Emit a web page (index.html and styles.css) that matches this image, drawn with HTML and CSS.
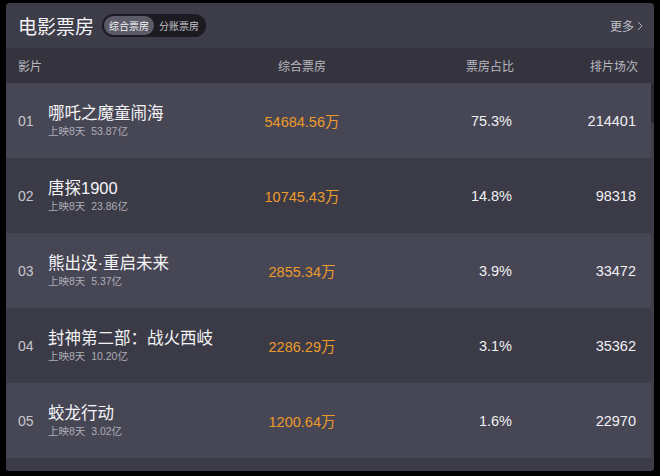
FILE: index.html
```html
<!DOCTYPE html>
<html lang="zh-CN">
<head>
<meta charset="utf-8">
<title>电影票房</title>
<link rel="stylesheet" href="styles.css">
</head>
<body>
<div class="card">
  <div class="top">
    <h1 class="title">电影票房</h1>
    <div class="toggle">
      <span class="seg active">综合票房</span>
      <span class="seg">分账票房</span>
    </div>
    <a class="more">更多<svg class="chev" width="6" height="10" viewBox="0 0 6 10"><path d="M1 1 L5 5 L1 9" fill="none" stroke="currentColor" stroke-width="1"/></svg></a>
  </div>
  <div class="thead grid">
    <span class="h-name">影片</span>
    <span class="c-center">综合票房</span>
    <span class="c-right h-pad">票房占比</span>
    <span class="c-right h-pad">排片场次</span>
  </div>
  <div class="body">
    <div class="rows">
      <div class="row grid odd">
        <span class="rank">01</span>
        <div class="name"><div class="mt">哪吒之魔童闹海</div><div class="sub">上映8天&nbsp;&nbsp;53.87亿</div></div>
        <span class="c-center bo">54684.56万</span>
        <span class="c-right num">75.3%</span>
        <span class="c-right num">214401</span>
      </div>
      <div class="row grid even">
        <span class="rank">02</span>
        <div class="name"><div class="mt">唐探1900</div><div class="sub">上映8天&nbsp;&nbsp;23.86亿</div></div>
        <span class="c-center bo">10745.43万</span>
        <span class="c-right num">14.8%</span>
        <span class="c-right num">98318</span>
      </div>
      <div class="row grid odd">
        <span class="rank">03</span>
        <div class="name"><div class="mt">熊出没·重启未来</div><div class="sub">上映8天&nbsp;&nbsp;5.37亿</div></div>
        <span class="c-center bo">2855.34万</span>
        <span class="c-right num">3.9%</span>
        <span class="c-right num">33472</span>
      </div>
      <div class="row grid even">
        <span class="rank">04</span>
        <div class="name"><div class="mt">封神第二部：战火西岐</div><div class="sub">上映8天&nbsp;&nbsp;10.20亿</div></div>
        <span class="c-center bo">2286.29万</span>
        <span class="c-right num">3.1%</span>
        <span class="c-right num">35362</span>
      </div>
      <div class="row grid odd">
        <span class="rank">05</span>
        <div class="name"><div class="mt">蛟龙行动</div><div class="sub">上映8天&nbsp;&nbsp;3.02亿</div></div>
        <span class="c-center bo">1200.64万</span>
        <span class="c-right num">1.6%</span>
        <span class="c-right num">22970</span>
      </div>
      <div class="foot"></div>
    </div>
    <div class="scroll"><div class="thumb"></div></div>
  </div>
</div>
</body>
</html>
```
FILE: styles.css
```css
html, body {
  margin: 0;
  padding: 0;
  background: #000;
}
body {
  padding: 3px 6px 5px 6px;
  font-family: "Liberation Sans", "Noto Sans CJK SC", sans-serif;
}
.card {
  width: 648px;
  height: 468px;
  background: #3d3c49;
  border-radius: 4px;
  overflow: hidden;
  display: flex;
  flex-direction: column;
}
.top {
  height: 45px;
  display: flex;
  align-items: center;
  padding: 0 11px 0 12px;
  flex: none;
}
.title {
  margin: 0;
  font-size: 19px;
  font-weight: normal;
  color: #f4f4f6;
  font-family: "Noto Sans CJK SC", sans-serif;
  line-height: 24px;
}
.toggle {
  margin-left: 8px;
  display: flex;
  align-items: center;
  background: #1c1b21;
  border-radius: 12px;
  padding: 2px;
  height: 19px;
}
.seg {
  font-family: "Noto Sans CJK SC", sans-serif;
  font-size: 10px;
  line-height: 19px;
  padding: 0 5px;
  border-radius: 10px;
  color: #c4c4ca;
}
.seg.active {
  background: #5c5b68;
  color: #f4f4f6;
}
.more {
  margin-left: auto;
  display: flex;
  align-items: center;
  gap: 3px;
  font-family: "Noto Sans CJK SC", sans-serif;
  font-size: 12px;
  color: #c2c2c8;
}
.chev {
  color: #b0b0b6;
}
.grid {
  display: grid;
  grid-template-columns: 30px 194px 120px 150px 124px;
  align-items: center;
  padding-left: 12px;
}
.thead {
  height: 35px;
  background: #35343e;
  flex: none;
  font-family: "Noto Sans CJK SC", sans-serif;
  font-size: 12px;
  color: #b8b8c0;
}
.h-name {
  grid-column: 1 / 3;
}
.h-pad {
  margin-right: -2px;
}
.c-center {
  text-align: center;
}
.c-right {
  text-align: right;
}
.body {
  flex: 1;
  display: flex;
  min-height: 0;
}
.rows {
  flex: 1;
  display: flex;
  flex-direction: column;
}
.row {
  height: 75px;
  flex: none;
}
.odd {
  background: #474655;
}
.even {
  background: #3b3a47;
}
.foot {
  flex: 1;
  background: #3c3b48;
}
.scroll {
  width: 3px;
  background: #3e3d4a;
}
.thumb {
  height: 40px;
  background: #2a2931;
  border-radius: 2px;
}
.rank {
  font-size: 14px;
  color: #c6c6cc;
  padding-top: 1px;
}
.name {
  display: flex;
  flex-direction: column;
  margin-top: -1px;
}
.mt {
  font-family: "Liberation Sans", "Noto Sans CJK SC", sans-serif;
  font-size: 16.5px;
  line-height: 21px;
  color: #f4f4f6;
  white-space: nowrap;
}
.sub {
  font-size: 10.5px;
  line-height: 14px;
  color: #adadb5;
  white-space: nowrap;
}
.bo {
  font-size: 14.5px;
  color: #ec9a2a;
}
.num {
  font-size: 14.5px;
  color: #f0f0f2;
}
```
